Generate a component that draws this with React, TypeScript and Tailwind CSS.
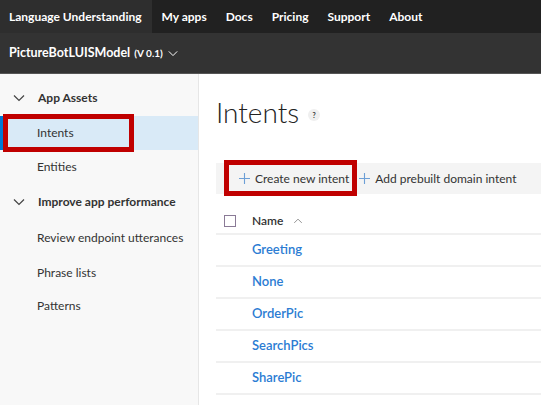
import React from 'react';

const navItems = ['My apps', 'Docs', 'Pricing', 'Support', 'About'];
const intents = ['Greeting', 'None', 'OrderPic', 'SearchPics', 'SharePic'];

const Chevron = ({ className = '' }: { className?: string }) => (
  <svg viewBox="0 0 12 8" className={className} fill="none" stroke="currentColor" strokeWidth="1.2">
    <path d="M1 1.5 L6 6.5 L11 1.5" />
  </svg>
);

const Plus = () => (
  <svg viewBox="0 0 12 12" className="w-[11px] h-[11px] text-[#6d9fd6]" fill="none" stroke="currentColor" strokeWidth="1.2">
    <path d="M6 0 V12 M0 6 H12" />
  </svg>
);

const SideItem = ({ label, selected }: { label: string; selected?: boolean }) => (
  <div className={`relative h-[34px] flex items-center pl-[37px] text-[12px] text-[#333] whitespace-nowrap ${selected ? 'bg-[#d9eaf7]' : ''}`}>
    {selected && <div className="absolute left-0 top-0 bottom-0 w-[3px] bg-[#0078d4]" />}
    {label}
    {selected && <div className="absolute left-[3px] top-[-2px] w-[131px] h-[38px] border-[5px] border-[#c00000]" />}
  </div>
);

const SideGroup = ({ label }: { label: string }) => (
  <div className="h-[36px] flex items-center text-[12px] font-bold text-[#333] whitespace-nowrap">
    <Chevron className="w-[12px] h-[8px] ml-[13px] mr-[13px] text-[#444]" />
    {label}
  </div>
);

export default function App() {
  return (
    <div className="w-[541px] h-[405px] overflow-hidden flex flex-col bg-white" style={{ fontFamily: 'Lato, "Open Sans", sans-serif' }}>
      {/* top nav */}
      <div className="h-[33px] flex bg-[#212121] text-white text-[12px] font-bold whitespace-nowrap">
        <div className="flex items-center pl-[9px] pr-[9px] w-[152px] bg-[#2e2e2e]">Language Understanding</div>
        {navItems.map((n) => (
          <div key={n} className="flex items-center px-[9.5px]">{n}</div>
        ))}
      </div>

      {/* app bar */}
      <div className="h-[41px] flex items-center bg-[#333] text-white pl-[9px] border-b border-[#555] whitespace-nowrap">
        <span className="text-[12.5px] font-bold">PictureBotLUISModel</span>
        <span className="text-[10px] font-bold ml-[4px]">(V 0.1)</span>
        <Chevron className="w-[10px] h-[7px] ml-[5px] text-white" />
      </div>

      <div className="flex flex-1">
        {/* sidebar */}
        <div className="w-[199px] bg-[#f8f8f8] border-r border-[#e6e6e6] pt-[6px]">
          <SideGroup label="App Assets" />
          <SideItem label="Intents" selected />
          <SideItem label="Entities" />
          <SideGroup label="Improve app performance" />
          <div className="h-[36px] flex items-center pl-[37px] text-[12px] text-[#333] whitespace-nowrap">Review endpoint utterances</div>
          <div className="h-[33px] flex items-center pl-[37px] text-[12px] text-[#333]">Phrase lists</div>
          <div className="h-[33px] flex items-center pl-[37px] text-[12px] text-[#333]">Patterns</div>
        </div>

        {/* main */}
        <div className="flex-1 pl-[17px] pt-[18px]">
          <div className="flex items-center h-[40px]">
            <span className="text-[28px] font-light text-[#222] leading-none">Intents</span>
            <span className="ml-[9px] mt-[6px] w-[12px] h-[12px] rounded-full bg-[#efefef] flex items-center justify-center text-[7px] font-bold text-[#333]">?</span>
          </div>

          {/* command bar */}
          <div className="mt-[31px] h-[31px] bg-[#f4f4f4] flex items-center text-[12px] text-[#333] whitespace-nowrap">
            <div className="relative flex items-center h-full pl-[23px] pr-[10px]">
              <Plus />
              <span className="ml-[5px]">Create new intent</span>
              <div className="absolute left-[8px] top-[-3px] w-[133px] h-[36px] border-[5px] border-[#c00000]" />
            </div>
            <div className="flex items-center h-full">
              <Plus />
              <span className="ml-[5px]">Add prebuilt domain intent</span>
            </div>
          </div>

          {/* table */}
          <div className="mt-[15px]">
            <div className="h-[26px] flex items-center border-b-2 border-[#f0f0f0]">
              <div className="ml-[8px] w-[12px] h-[12px] border border-[#8a7a96] bg-white" />
              <span className="ml-[16px] text-[12px] font-semibold text-[#333]">Name</span>
              <Chevron className="ml-[10px] w-[10px] h-[6px] text-[#888] rotate-180" />
            </div>
            {intents.map((n) => (
              <div key={n} className="h-[32px] flex items-center border-b-2 border-[#f0f0f0] pl-[36px] text-[13px] font-semibold text-[#2b7cd3]">
                {n}
              </div>
            ))}
          </div>
        </div>
      </div>
    </div>
  );
}
